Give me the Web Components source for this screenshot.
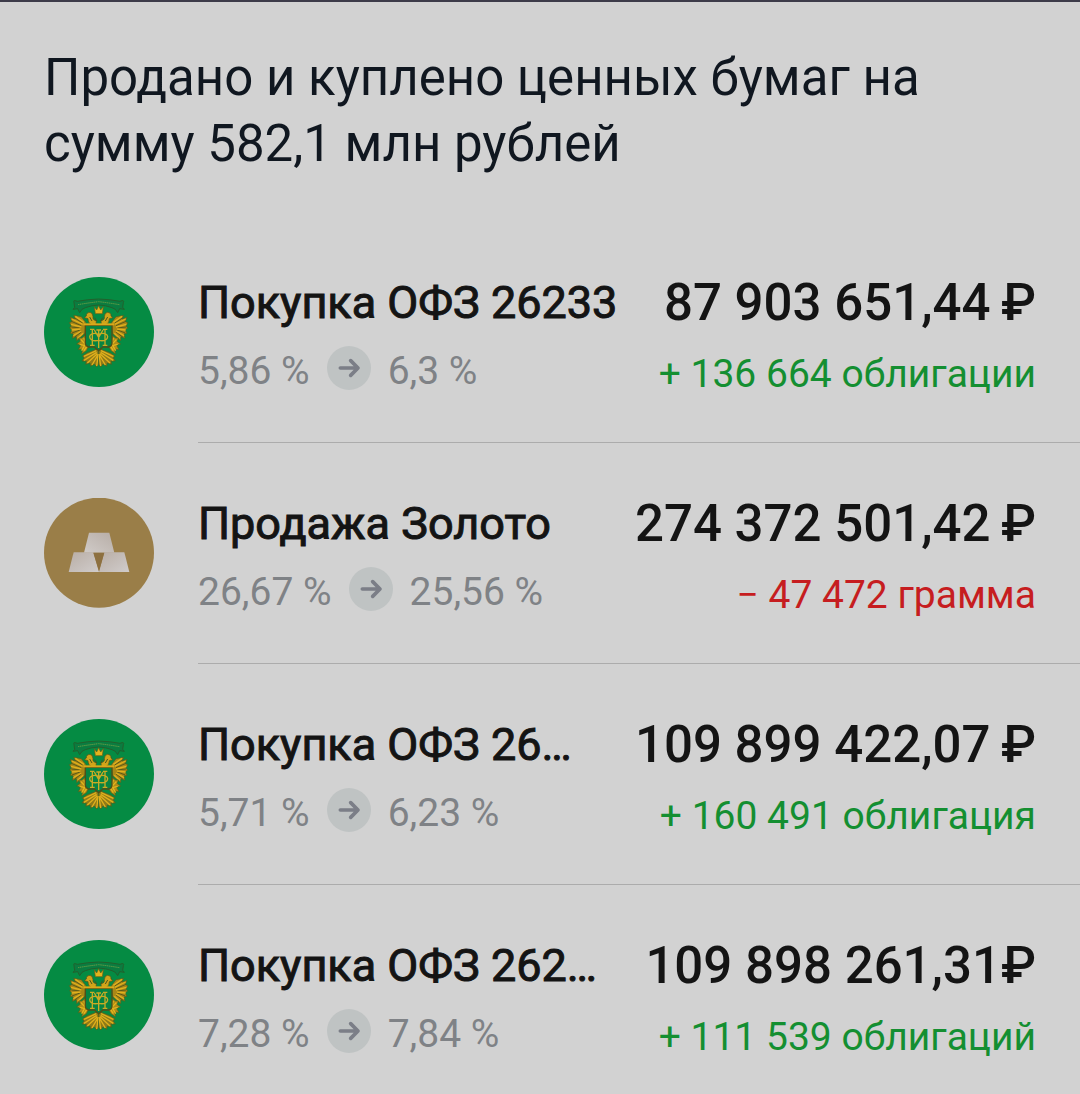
<!DOCTYPE html>
<html lang="ru">
<head>
<meta charset="UTF-8">
<meta name="viewport" content="width=device-width, initial-scale=1">
<title>Сделки</title>
<style>
    body {
        margin: 0;
        background: #d2d2d2;
        font-family: Roboto, "Liberation Sans", sans-serif;
    }
</style>
</head>
<body>
<deals-panel>
    <span slot="heading">Продано и куплено ценных бумаг на сумму 582,1 млн рублей</span>
    <deal-row data-icon="bond" data-title="Покупка ОФЗ 26233" data-from="5,86 %" data-to="6,3 %" data-amount="87 903 651,44&thinsp;₽">+ 136 664 облигации</deal-row>
    <deal-row data-icon="gold" data-title="Продажа Золото" data-from="26,67 %" data-to="25,56 %" data-amount="274 372 501,42&thinsp;₽" data-sell>− 47 472 грамма</deal-row>
    <deal-row data-icon="bond" data-title="Покупка ОФЗ 26…" data-from="5,71 %" data-to="6,23 %" data-amount="109 899 422,07&thinsp;₽">+ 160 491 облигация</deal-row>
    <deal-row data-icon="bond" data-title="Покупка ОФЗ 262…" data-from="7,28 %" data-to="7,84 %" data-amount="109 898 261,31₽">+ 111 539 облигаций</deal-row>
</deals-panel>

<script>
// One side of the eagle, mirrored for the other one
const eagleHalf = `
    <path d="M194 97 Q160 98 130 104 Q116 98 120 108 L122 122 L117 128 L131 126 L137 138 Q142 126 154 123 Q172 116 194 115" fill="#0b7c40" stroke="#23602c" stroke-width="3"/>
    <path d="M132 114 Q160 109 194 105" stroke="#6fa045" stroke-width="3" stroke-dasharray="4 2" fill="none"/>
    <path d="M168 137 Q156 138 157 148 L151 153 L162 156 Q161 168 172 174 L186 174 L187 162 Q175 160 177 150 Q176 138 168 137 Z" fill="#cfa41a" stroke="#514f17" stroke-width="2"/>
    <path d="M167 151 L174 163 M182 153 L188 163" stroke="#4b531b" stroke-width="3"/>
    <path d="M156 168 L142 150 L119 146 L124 157 L109 152 L114 165 L106 168 L112 178 L107 184 L114 190 L109 200 L118 202 L115 215 L127 210 L128 222 L144 208 L153 200 Z" fill="#a98717" stroke="#4d601f" stroke-width="2" stroke-linejoin="round"/>
    <path d="M121 153 L146 169 M112 164 L142 177 M112 181 L140 184 M114 199 L140 189 M121 212 L142 196" stroke="#5a5a19" stroke-width="3"/>
    <path d="M124 149 L150 167 M113 157 L146 173 M111 173 L142 181 M113 190 L140 187 M118 207 L142 193 M131 215 L147 200" stroke="#e0b01e" stroke-width="4"/>
    <path d="M154 206 L143 214 L134 214 L139 224 L128 232 L140 236 L133 249 L146 247 L143 262 L157 252 L166 236 L155 226 Z" fill="#b08c17" stroke="#49601f" stroke-width="2" stroke-linejoin="round"/>
    <path d="M141 219 L154 233 L143 252 M150 214 L155 230 M137 233 L150 236 M159 238 L150 252" stroke="#e5b51d" stroke-width="4" fill="none"/>
    <path d="M186 248 L160 258 L145 268 L150 274 L144 283 L157 284 L155 293 L168 289 L170 299 L181 292 L188 301 L194 292 V248 Z" fill="#8f7a18" stroke="#48601f" stroke-width="2" stroke-linejoin="round"/>
    <path d="M187 252 L150 269 M188 257 L150 281 M190 261 L160 289 M191 266 L174 295 M193 262 L188 298" stroke="#e0b01c" stroke-width="4"/>`;

const icons = {
    bond: `
        <circle cx="195" cy="196" r="165" fill="#058b43"/>
        <g>${eagleHalf}</g>
        <g transform="translate(388 0) scale(-1 1)">${eagleHalf}</g>
        <path d="M181 120 L188 130 L194 117 L200 130 L208 120 L205 141 H184 Z" fill="#e3b31c" stroke="#6a5d17" stroke-width="2"/>
        <path d="M154 176 H234 V230 Q234 239 224 241 H207 L194 252 L181 241 H164 Q154 239 154 230 Z" fill="#078442" stroke="#514e18" stroke-width="4"/>
        <path d="M148 173 H240" stroke="#d9a91a" stroke-width="6"/>
        <path d="M168 188 H181 M175 188 V236 M168 236 H182 M207 188 H220 M213 188 V236 M206 236 H220 M181 190 L194 212 L207 190 M194 188 V244 M187 190 H201 M194 203 C158 190 158 230 194 221 C230 230 230 190 194 203" fill="none" stroke="#c9ab24" stroke-width="4"/>`,
    gold: `
        <defs>
            <linearGradient id="bar" x1="0" y1="1" x2="1" y2="0">
                <stop offset="0" stop-color="#d0cbc8"/>
                <stop offset="1" stop-color="#b7ada6"/>
            </linearGradient>
            <linearGradient id="side" x1="0" y1="0" x2="1" y2="1">
                <stop offset="0" stop-color="#b9aea6"/>
                <stop offset="1" stop-color="#d0cccb"/>
            </linearGradient>
        </defs>
        <circle cx="195" cy="195" r="165" fill="#9a7e48"/>
        <path d="M165 135 H226 L241 195 H150 Z" fill="url(#bar)"/>
        <path d="M119 194 H178 L195 253 H104 Z" fill="url(#side)"/>
        <path d="M211 194 H271 L286 253 H195 Z" fill="url(#side)"/>
        <path d="M178 195 H211 L195 250 Z" fill="#8d7040"/>`
};

class AssetIcon extends HTMLElement {
    constructor() {
        super();
        this.attachShadow({ mode: "open" });
    }

    connectedCallback() {
        this.shadowRoot.innerHTML = `
            <style>
                :host {
                    display: block;
                    flex: none;
                    width: 110px;
                    height: 110px;
                }
                svg {
                    display: block;
                    width: 100%;
                    height: 100%;
                }
            </style>
            <svg viewBox="30 31 330 330" fill="none" aria-hidden="true">${icons[this.getAttribute("data-kind")]}</svg>
        `;
    }
}

class ShareChange extends HTMLElement {
    constructor() {
        super();
        this.attachShadow({ mode: "open" });
    }

    connectedCallback() {
        this.shadowRoot.innerHTML = `
            <style>
                :host {
                    display: flex;
                    align-items: flex-start;
                    gap: 17px;
                    color: #7f8286;
                    font-size: 39px;
                    line-height: 50px;
                    white-space: nowrap;
                }
                svg {
                    flex: none;
                    width: 44px;
                    height: 44px;
                }
            </style>
            <span>${this.getAttribute("data-from")}</span>
            <svg viewBox="0 0 132 132" fill="none" aria-hidden="true">
                <circle cx="66" cy="66" r="66" fill="#bfc3c3"/>
                <path d="M40 66 H92 M71 44 L93 66 L71 88" stroke="#7b7e87" stroke-width="11" stroke-linecap="round" stroke-linejoin="round"/>
            </svg>
            <span>${this.getAttribute("data-to")}</span>
        `;
    }
}

class DealRow extends HTMLElement {
    constructor() {
        super();
        this.attachShadow({ mode: "open" });
    }

    connectedCallback() {
        this.shadowRoot.innerHTML = `
            <style>
                :host {
                    display: flex;
                    align-items: flex-start;
                    gap: 44px;
                    padding-left: 44px;
                }
                asset-icon {
                    margin-top: 55px;
                }
                .body {
                    flex: 1;
                    display: flex;
                    justify-content: space-between;
                    padding: 52px 44px 46px 0;
                    border-bottom: 1px solid #acacac;
                }
                :host(:last-of-type) .body {
                    border-bottom-color: transparent;
                }
                .left, .right {
                    display: flex;
                    flex-direction: column;
                    white-space: nowrap;
                }
                .left {
                    gap: 14px;
                }
                .right {
                    align-items: flex-end;
                    gap: 20px;
                }
                h2, .amount {
                    margin: 0;
                    color: #141414;
                    line-height: 58px;
                }
                h2 {
                    font-size: 45px;
                    font-weight: 400;
                    -webkit-text-stroke: 1px #141414;
                }
                .amount {
                    font-size: 51px;
                    font-weight: 500;
                }
                .quantity {
                    color: #148f31;
                    font-size: 39px;
                    line-height: 44px;
                }
                :host([data-sell]) .quantity {
                    color: #c61d20;
                }
            </style>
            <asset-icon data-kind="${this.getAttribute("data-icon")}"></asset-icon>
            <div class="body">
                <div class="left">
                    <h2>${this.getAttribute("data-title")}</h2>
                    <share-change data-from="${this.getAttribute("data-from")}" data-to="${this.getAttribute("data-to")}"></share-change>
                </div>
                <div class="right">
                    <div class="amount">${this.getAttribute("data-amount")}</div>
                    <div class="quantity"><slot></slot></div>
                </div>
            </div>
        `;
    }
}

class DealsPanel extends HTMLElement {
    constructor() {
        super();
        this.attachShadow({ mode: "open" });
    }

    connectedCallback() {
        this.shadowRoot.innerHTML = `
            <style>
                :host {
                    display: block;
                    border-top: 2px solid #3d3b49;
                }
                h1 {
                    margin: 0;
                    padding: 43px 44px 45px;
                    color: #101720;
                    font-size: 51px;
                    font-weight: 400;
                    line-height: 66px;
                }
            </style>
            <h1><slot name="heading"></slot></h1>
            <slot></slot>
        `;
    }
}

customElements.define("asset-icon", AssetIcon);
customElements.define("share-change", ShareChange);
customElements.define("deal-row", DealRow);
customElements.define("deals-panel", DealsPanel);
</script>
</body>
</html>
